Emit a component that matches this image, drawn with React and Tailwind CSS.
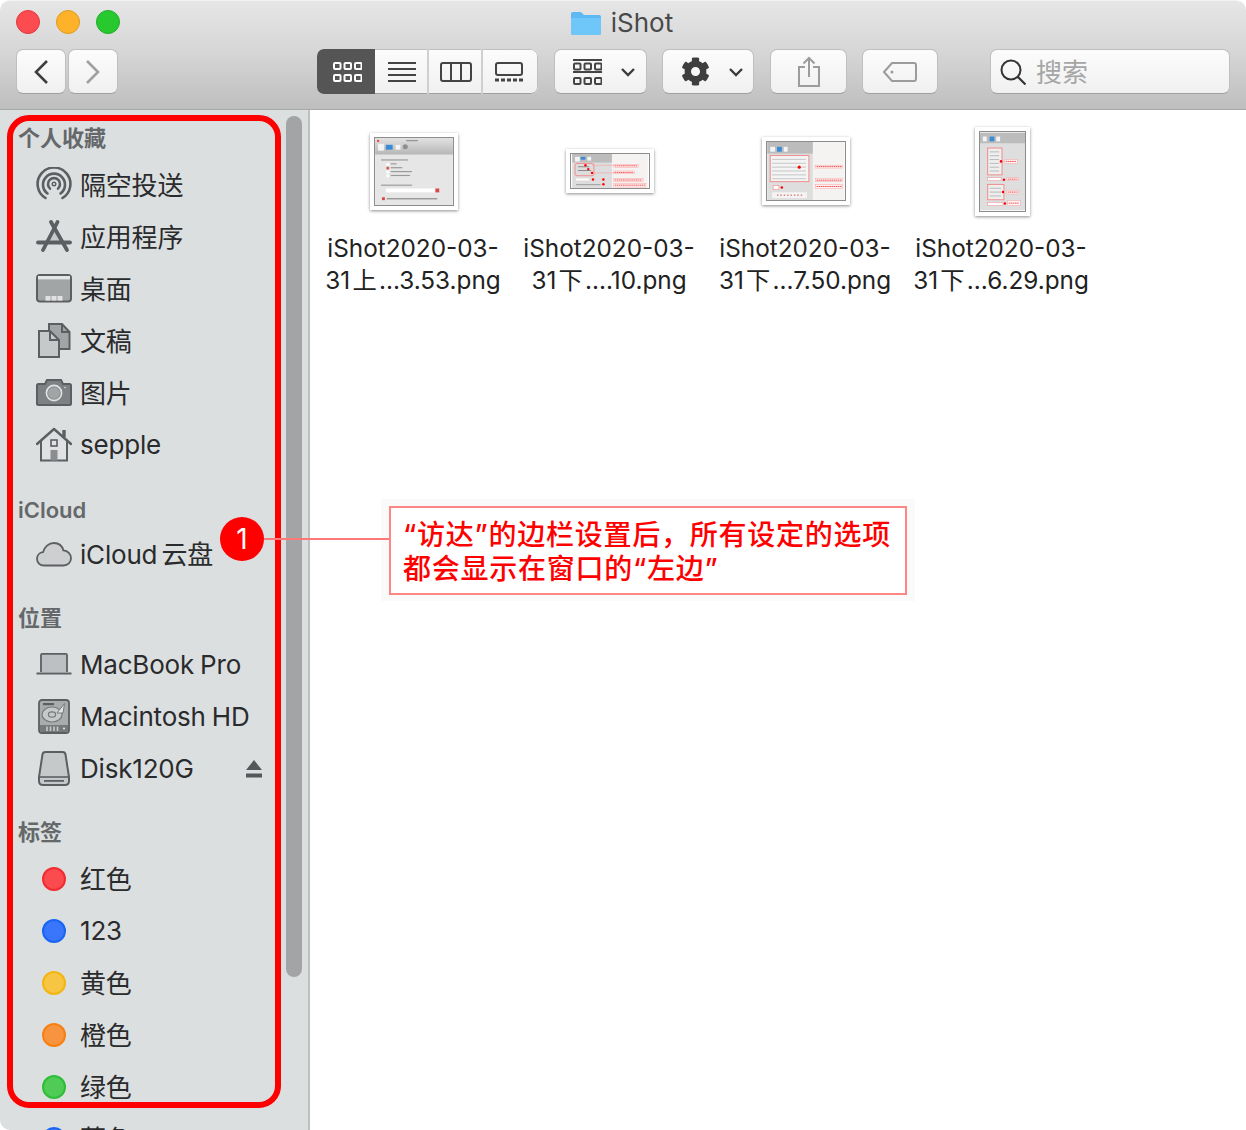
import React from 'react';
import { FaCog } from 'react-icons/fa';

const DARK = '#5c5f62';

const Svg = ({ w = 36, h = 36, className = '', children }) => (
    <svg width={w} height={h} viewBox={`0 0 ${w} ${h}`} className={`block shrink-0 ${className}`} fill="none">
        {children}
    </svg>
);

// sidebar icons
const AirdropIcon = () => (
    <Svg>
        <g stroke={DARK} strokeWidth="2.6" strokeLinecap="round">
            <path d="M9.5 31 A16.4 16.4 0 1 1 26.5 31" />
            <path d="M11.5 26.5 A11 11 0 1 1 24.5 26.5" />
            <path d="M14 21.6 A6 6 0 1 1 22 21.6" />
        </g>
        <circle cx="18" cy="17" r="1.8" stroke={DARK} strokeWidth="1.4" />
    </Svg>
);

const AppsIcon = () => (
    <Svg>
        <path d="M18 11 L10 24 H26 Z" fill="#c6c9ca" />
        <g stroke={DARK} strokeWidth="3.8" strokeLinecap="round">
            <path d="M21.5 3 L7 31" />
            <path d="M15 3 L31 31" />
            <path d="M2 23.5 H34" />
        </g>
    </Svg>
);

const DesktopIcon = () => (
    <Svg>
        <rect x="1" y="4" width="34" height="26.5" rx="3" fill="#a2a5a6" stroke={DARK} strokeWidth="2" />
        <rect x="2" y="5" width="32" height="3.4" fill="#e4e5e6" />
        <rect x="9.5" y="25" width="5" height="4.6" fill="#dfe1e2" />
        <rect x="15.5" y="25" width="5" height="4.6" fill="#dfe1e2" />
        <rect x="21.5" y="25" width="5" height="4.6" fill="#dfe1e2" />
    </Svg>
);

const DocsIcon = () => (
    <Svg>
        <path d="M13 1 H26 L33.5 9 V26 H13 Z" fill="#a2a5a6" stroke={DARK} strokeWidth="2" />
        <path d="M26 1 V9 H33.5" stroke={DARK} strokeWidth="2" />
        <path d="M3 8 H14 L23 17 V34 H3 Z" fill="#c6c9ca" stroke={DARK} strokeWidth="2" />
        <path d="M14 8 V17 H23" stroke={DARK} strokeWidth="2" />
    </Svg>
);

const CameraIcon = () => (
    <Svg>
        <path d="M2.5 9 H9 L11 5 H25 L27 9 H33.5 Q35 9 35 10.5 V28.5 Q35 30 33.5 30 H2.5 Q1 30 1 28.5 V10.5 Q1 9 2.5 9 Z" fill="#7e8183" stroke={DARK} strokeWidth="2" />
        <circle cx="18" cy="18" r="7.6" fill="#8b8e90" stroke="#dfe1e2" strokeWidth="1.6" />
        <circle cx="18" cy="18" r="5.8" fill="#a2a5a6" />
        <circle cx="29" cy="12.5" r="0.8" fill="#dfe1e2" />
    </Svg>
);

const HomeIcon = () => (
    <Svg>
        <path d="M5 14 V33.5 H31 V14" fill="#dfe1e2" stroke={DARK} strokeWidth="2" />
        <path d="M1 17 L18 2 L35 17" stroke={DARK} strokeWidth="2.4" strokeLinecap="round" strokeLinejoin="round" />
        <path d="M28 10 V3" stroke={DARK} strokeWidth="3.4" />
        <rect x="15" y="13" width="6" height="6" stroke={DARK} strokeWidth="1.6" />
        <rect x="14.5" y="23" width="7" height="10.5" fill="#8b8e90" />
    </Svg>
);

const CloudIcon = () => (
    <Svg>
        <path d="M8 28.5 C3.8 28.5 1 25.6 1 21.8 C1 18.2 3.6 15.5 7 15.2 C8.4 10 12.6 6 18 6 C22.8 6 26.2 9 27.4 13.4 C31.8 13.8 35 17 35 21.2 C35 25.4 31.8 28.5 27.6 28.5 Z" fill="#cdcfd1" stroke={DARK} strokeWidth="1.8" />
    </Svg>
);

const LaptopIcon = () => (
    <Svg>
        <path d="M5 25 V8 Q5 6.8 6.2 6.8 H29.8 Q31 6.8 31 8 V25" fill="#bdc0c2" stroke={DARK} strokeWidth="1.8" />
        <path d="M0.5 26.5 H35.5" stroke={DARK} strokeWidth="2" />
    </Svg>
);

const HddIcon = () => (
    <Svg>
        <rect x="3" y="1" width="30" height="33" rx="3" fill="#a9acad" stroke={DARK} strokeWidth="1.8" />
        <rect x="7" y="4" width="11" height="2.2" fill={DARK} />
        <ellipse cx="16" cy="15.5" rx="10" ry="7.5" fill="#c6c9ca" stroke="#777a7c" strokeWidth="1.2" />
        <ellipse cx="16" cy="15.5" rx="3.6" ry="2.6" stroke="#777a7c" strokeWidth="1.2" />
        <path d="M21 14 L28.5 4.5 L27 14 Z" fill="#e4e5e6" stroke="#777a7c" strokeWidth="1" />
        <path d="M4 26 H32 V31 Q32 33 30 33 H6 Q4 33 4 31 Z" fill="#77797b" />
        <path d="M11 27.5 V32 M14.5 27.5 V32 M18 27.5 V32 M21.5 27.5 V32" stroke="#c6c9ca" strokeWidth="1.6" />
        <circle cx="28" cy="29.5" r="1.1" fill="#dfe1e2" />
    </Svg>
);

const DiskIcon = () => (
    <Svg>
        <path d="M6.5 3.5 Q6.8 1 9.5 1 H26.5 Q29.2 1 29.5 3.5 L33 26 V30 Q33 34 29 34 H7 Q3 34 3 30 V26 Z" fill="#c6c9ca" stroke={DARK} strokeWidth="2" />
        <path d="M3.5 26 H32.5" stroke={DARK} strokeWidth="1.6" />
        <rect x="8" y="29" width="20" height="1.8" fill={DARK} />
    </Svg>
);

const EjectIcon = () => (
    <Svg w={16} h={18}>
        <path d="M8 0 L16 10 H0 Z" fill="#55585a" />
        <rect x="0" y="13.5" width="16" height="4" fill="#55585a" />
    </Svg>
);

const Dot = ({ className }) => (
    <div className="w-[36px] flex justify-center shrink-0">
        <div className={`w-[24px] h-[24px] rounded-full border-2 ${className}`} />
    </div>
);

const Row = ({ icon, label, trailing }) => {
    // chinese-only labels sit a pixel lower than latin ones
    const cjk = /^[\u4e00-\u9fff]+$/.test(label);
    return (
        <div className="h-[52px] flex items-center pl-[36px] pr-[24px] gap-[8px]">
            {icon}
            <span className={`text-[26px] leading-[32px] tracking-[-0.2px] [word-spacing:-1px] text-[#2a2b2c] whitespace-nowrap ${cjk ? 'pt-[2px]' : ''}`}>{label}</span>
            {trailing && <span className="ml-auto">{trailing}</span>}
        </div>
    );
};

const Heading = ({ children, className = 'h-[58px] pb-[10px]' }) => (
    <div className={`flex items-end pl-[18px] text-[22px] leading-[22px] font-semibold text-[#65686a] ${className}`}>
        {children}
    </div>
);

const Sidebar = () => (
    <aside className="w-[310px] shrink-0 flex bg-[#dcdfe0] border-r-2 border-[#bfc0c0] rounded-bl-[10px] overflow-hidden">
        <div className="w-[286px] shrink-0">
            <Heading className="h-[49px] pb-[10px]">个人收藏</Heading>
            <Row icon={<AirdropIcon />} label="隔空投送" />
            <Row icon={<AppsIcon />} label="应用程序" />
            <Row icon={<DesktopIcon />} label="桌面" />
            <Row icon={<DocsIcon />} label="文稿" />
            <Row icon={<CameraIcon />} label="图片" />
            <Row icon={<HomeIcon />} label="sepple" />
            <Heading className="h-[58px] pb-[8px]">iCloud</Heading>
            <Row icon={<CloudIcon />} label={'iCloud\u2006云盘'} />
            <Heading>位置</Heading>
            <Row icon={<LaptopIcon />} label="MacBook Pro" />
            <Row icon={<HddIcon />} label="Macintosh HD" />
            <Row icon={<DiskIcon />} label="Disk120G" trailing={<EjectIcon />} />
            <Heading>标签</Heading>
            <Row icon={<Dot className="bg-[#fb4b4f] border-[#f02c30]" />} label="红色" />
            <Row icon={<Dot className="bg-[#3a76fb] border-[#1764f5]" />} label="123" />
            <Row icon={<Dot className="bg-[#f6c543] border-[#f4b50f]" />} label="黄色" />
            <Row icon={<Dot className="bg-[#f7943f] border-[#f87f10]" />} label="橙色" />
            <Row icon={<Dot className="bg-[#50cb55] border-[#2ebd37]" />} label="绿色" />
            <Row icon={<Dot className="bg-[#3a76fb] border-[#1764f5]" />} label="蓝色" />
        </div>
        <div className="w-[16px] h-[861px] mt-[6px] shrink-0 rounded-full bg-[#a3a4a6]" />
    </aside>
);

// toolbar
const btn = 'h-[45px] rounded-[7px] bg-gradient-to-b from-[#fcfcfc] to-[#f0f0f0] border border-[#bfbfbf] border-b-[#a0a0a0] flex items-center justify-center shrink-0';
const segBorder = 'border-y border-[#bfbfbf] border-b-[#a0a0a0]';

const Squares = ({ y = 0, color, sw = 2 }) => (
    <g stroke={color} strokeWidth={sw}>
        {[0, 10.5, 21].map((x) => (
            <rect key={x} x={x + 1} y={y + 1} width="6.5" height="6" rx="1" />
        ))}
    </g>
);

const Chevron = () => (
    <svg width="16" height="10" viewBox="0 0 16 10" fill="none" className="block">
        <path d="M2 2 L8 8 L14 2" stroke="#3c3c3c" strokeWidth="2.4" />
    </svg>
);

const ViewSwitch = () => (
    <div className="w-[221px] h-[45px] flex rounded-[7px] overflow-hidden bg-gradient-to-b from-[#fcfcfc] to-[#f0f0f0] shrink-0">
        <div className="w-[58px] flex items-center justify-center bg-[#555555] pl-[3px]">
            <Svg w={29} h={20}>
                <Squares color="#fff" />
                <Squares y={12} color="#fff" />
            </Svg>
        </div>
        <div className={`w-[54px] flex items-center justify-center ${segBorder}`}>
            <Svg w={28} h={20}>
                <path d="M0 1 H28 M0 7 H28 M0 13 H28 M0 19 H28" stroke="#444" strokeWidth="2" />
            </Svg>
        </div>
        <div className="w-[2px] bg-[#cfcfcf] -ml-[2px] shrink-0" />
        <div className={`w-[54px] flex items-center justify-center ${segBorder}`}>
            <Svg w={32} h={20}>
                <rect x="1" y="1" width="30" height="18" rx="2" stroke="#444" strokeWidth="2" />
                <path d="M11 1 V19 M21 1 V19" stroke="#444" strokeWidth="2" />
            </Svg>
        </div>
        <div className="w-[2px] bg-[#cfcfcf] -ml-[2px] shrink-0" />
        <div className={`flex-1 flex items-center justify-center pr-[3px] rounded-r-[7px] border-r ${segBorder}`}>
            <Svg w={28} h={20}>
                <rect x="1" y="1" width="26" height="12" rx="2" stroke="#444" strokeWidth="2" />
                <path d="M0 18 H28" stroke="#444" strokeWidth="3" strokeDasharray="4 2" />
            </Svg>
        </div>
    </div>
);

const Toolbar = () => (
    <header className="h-[110px] shrink-0 rounded-t-[10px] bg-gradient-to-b from-[#e6e6e6] via-[#d5d5d5] to-[#bebebe] border-t border-[#f2f2f2] border-b border-b-[#a9a9a9]">
        <div className="h-[48px] relative flex items-center justify-center gap-[10px] pb-[4px] pr-[2px]">
            <div className="absolute left-[16px] top-[9px] flex gap-[16px]">
                <div className="w-[24px] h-[24px] rounded-full bg-[#fc4c50] border border-[#e2383d]" />
                <div className="w-[24px] h-[24px] rounded-full bg-[#fdb22a] border border-[#e09a1a]" />
                <div className="w-[24px] h-[24px] rounded-full bg-[#28c82f] border border-[#1fae27]" />
            </div>
            <Svg w={30} h={24}>
                <path d="M0 3 Q0 1 2 1 H10 L13 4 H28 Q30 4 30 6 V22 Q30 24 28 24 H2 Q0 24 0 22 Z" fill="#5cb9f3" />
                <path d="M0 7 H30 V22 Q30 24 28 24 H2 Q0 24 0 22 Z" fill="#6fc6f8" />
            </Svg>
            <span className="text-[26px] leading-[32px] text-[#48494a]">iShot</span>
        </div>
        <div className="flex items-center px-[16px]">
            <div className={`${btn} w-[50px]`}>
                <svg width="16" height="26" viewBox="0 0 16 26" fill="none">
                    <path d="M14 2 L3 13 L14 24" stroke="#3f3f3f" strokeWidth="2.6" />
                </svg>
            </div>
            <div className={`${btn} w-[50px] ml-[2px]`}>
                <svg width="16" height="26" viewBox="0 0 16 26" fill="none">
                    <path d="M2 2 L13 13 L2 24" stroke="#a0a0a0" strokeWidth="2.6" />
                </svg>
            </div>
            <div className="ml-[199px]">
                <ViewSwitch />
            </div>
            <div className={`${btn} w-[93px] ml-[16px] gap-[18px] pl-[8px]`}>
                <Svg w={29} h={26}>
                    <path d="M0 1 H29 M0 13 H29" stroke="#444" strokeWidth="2" />
                    <Squares y={3.5} color="#444" />
                    <Squares y={18} color="#444" />
                </Svg>
                <Chevron />
            </div>
            <div className={`${btn} w-[92px] ml-[15px] gap-[18px] pl-[8px]`}>
                <FaCog className="w-[29px] h-[29px] text-[#3e3e3e]" />
                <Chevron />
            </div>
            <div className={`${btn} w-[77px] ml-[16px]`}>
                <Svg w={22} h={31}>
                    <path d="M7 11 H1 V30 H21 V11 H15" stroke="#9c9c9c" strokeWidth="2" />
                    <path d="M11 21 V2 M5.5 7.5 L11 2 L16.5 7.5" stroke="#9c9c9c" strokeWidth="2" />
                </Svg>
            </div>
            <div className={`${btn} w-[76px] ml-[15px]`}>
                <Svg w={34} h={20}>
                    <path d="M9 1 H31 Q33 1 33 3 V17 Q33 19 31 19 H9 L1 10 Z" stroke="#9c9c9c" strokeWidth="2" />
                    <circle cx="9" cy="10" r="1.5" fill="#9c9c9c" />
                </Svg>
            </div>
            <div className={`${btn} w-[240px] ml-[52px] justify-start pl-[9px] gap-[10px]`}>
                <Svg w={26} h={26}>
                    <circle cx="11" cy="11" r="9.5" stroke="#333" strokeWidth="2" />
                    <path d="M18 18 L25.5 25.5" stroke="#333" strokeWidth="2.2" />
                </Svg>
                <span className="text-[26px] leading-[32px] text-[#a6a6a6] mt-[2px]">搜索</span>
            </div>
        </div>
    </header>
);

// file thumbnails
const Thumb = ({ w, h, children }) => (
    <div className="bg-white shadow-[0_1px_3px_rgba(0,0,0,0.45)] p-[4px]" style={{ width: w, height: h }}>
        <svg width={w - 8} height={h - 8} viewBox={`0 0 ${w - 8} ${h - 8}`} className="block border border-[#8c8c8c] blur-[0.4px]">
            {children}
        </svg>
    </div>
);

const ThumbBar = ({ w }) => (
    <>
        <defs>
            <linearGradient id={`tb${w}`} x1="0" y1="0" x2="0" y2="1">
                <stop offset="0" stopColor="#e2e2e2" />
                <stop offset="1" stopColor="#b6b6b6" />
            </linearGradient>
        </defs>
        <rect width={w} height="17" fill={`url(#tb${w})`} />
        <circle cx="3" cy="3" r="1.2" fill="#f44" />
        <rect x="3" y="6" width="6" height="7" fill="#f4f4f4" />
        <rect x="11" y="7" width="7" height="5" fill="#3b8ad8" />
        <rect x="21" y="7" width="5" height="5" fill="#f4f4f4" />
        <circle cx="31" cy="9" r="2.6" fill="#8e8e8e" />
        <rect x="32" y="2" width="12" height="1.4" fill="#999" />
    </>
);

// red note box next to a thumbnail's screenshot
const Note = ({ x, y, w, h }) => (
    <>
        <rect x={x} y={y} width={w} height={h} fill="#fff3f3" stroke="#f4a0a0" strokeWidth="0.5" />
        <path d={`M${x + 1} ${y + h / 2} H${x + w - 1}`} stroke="#e33" strokeWidth="0.9" strokeDasharray="1.6 0.6" />
    </>
);

const ThumbOne = () => (
    <Thumb w={88} h={77}>
        <rect width="80" height="69" fill="#e6e6e6" />
        <ThumbBar w={80} />
        <rect x="6" y="22" width="28" height="1.2" fill="#999" />
        <circle cx="13" cy="27" r="1.6" fill="#fff" />
        <rect x="16" y="26" width="6" height="1.2" fill="#999" />
        <circle cx="13" cy="31" r="1.6" fill="#d65a5a" />
        <rect x="16" y="30" width="12" height="1.2" fill="#999" />
        <circle cx="13" cy="35" r="1.6" fill="#fff" />
        <rect x="16" y="34" width="22" height="1.2" fill="#999" />
        <circle cx="13" cy="39" r="1.6" fill="#fff" />
        <rect x="16" y="38" width="20" height="1.2" fill="#999" />
        <rect x="6" y="48" width="32" height="1.2" fill="#999" />
        <rect x="11" y="52" width="51" height="4" fill="#fff" />
        <rect x="62" y="52" width="4" height="4" fill="#d64a4a" />
        <rect x="7" y="61" width="3" height="3" fill="#d64a4a" />
        <rect x="12" y="62" width="52" height="1.2" fill="#888" />
    </Thumb>
);

const ThumbTwo = () => (
    <Thumb w={88} h={44}>
        <rect width="80" height="36" fill="#f5f3f1" />
        <rect width="42" height="36" fill="#dddddd" />
        <rect width="42" height="9" fill="#bcbcbc" />
        <rect x="3" y="3" width="5" height="5" fill="#f4f4f4" />
        <rect x="9" y="3" width="5" height="3" fill="#3b8ad8" />
        <rect x="16" y="3" width="4" height="4" fill="#f4f4f4" />
        <rect x="3" y="10" width="20" height="13" rx="2" fill="none" stroke="#f08a8a" />
        <rect x="6" y="13" width="12" height="1" fill="#888" />
        <rect x="6" y="17" width="14" height="1" fill="#888" />
        <circle cx="14" cy="12" r="1.3" fill="#f00" />
        <circle cx="17" cy="16" r="1.3" fill="#f00" />
        <circle cx="21" cy="20" r="1.3" fill="#f00" />
        <rect x="4" y="26" width="14" height="2" fill="#fff" />
        <circle cx="22" cy="27" r="1.3" fill="#f00" />
        <circle cx="33" cy="27" r="1.3" fill="#f00" />
        <rect x="4" y="32" width="26" height="1" fill="#999" />
        <circle cx="33" cy="32" r="1.3" fill="#f00" />
        <path d="M21 12 H44 M24 20 H44" stroke="#f4a0a0" strokeWidth="0.6" />
        <Note x={44} y={11} w={26} h={3} />
        <Note x={44} y={18} w={22} h={3} />
        <Note x={44} y={26} w={31} h={3} />
        <Note x={44} y={31} w={34} h={4} />
    </Thumb>
);

const ThumbThree = () => (
    <Thumb w={88} h={68}>
        <rect width="80" height="60" fill="#f5f3f1" />
        <rect width="47" height="60" fill="#dedede" />
        <rect width="47" height="12" fill="#bcbcbc" />
        <rect x="3" y="5" width="5" height="5" fill="#f4f4f4" />
        <rect x="10" y="5" width="5" height="5" fill="#3b8ad8" />
        <rect x="17" y="5" width="4" height="5" fill="#f4f4f4" />
        <rect x="3" y="14" width="40" height="27" fill="#f4f4f4" stroke="#f08a8a" />
        <path d="M5 18 H40 M5 22 H40 M5 26 H40 M5 30 H40 M5 34 H40 M5 38 H40" stroke="#b8b8b8" strokeWidth="0.8" />
        <circle cx="33" cy="26" r="1.6" fill="#f00" />
        <rect x="6" y="45" width="6" height="4" fill="#fff" stroke="#f08a8a" strokeWidth="0.6" />
        <circle cx="15" cy="47" r="1.3" fill="#f00" />
        <rect x="5" y="52" width="36" height="6" fill="#f4f4f4" />
        <path d="M10 55 H36" stroke="#c44" strokeWidth="1" strokeDasharray="1.5 2" />
        <Note x={50} y={24} w={28} h={3} />
        <Note x={50} y={38} w={28} h={3} />
        <Note x={50} y={44} w={28} h={4} />
    </Thumb>
);

const ThumbFour = () => (
    <Thumb w={55} h={89}>
        <rect width="47" height="81" fill="#dedede" />
        <rect width="47" height="11" fill="#bcbcbc" />
        <rect x="3" y="4" width="4" height="5" fill="#f4f4f4" />
        <rect x="10" y="4" width="5" height="5" fill="#3b8ad8" />
        <rect x="17" y="4" width="4" height="5" fill="#f4f4f4" />
        <rect x="8" y="16" width="15" height="28" fill="#eee" stroke="#f08a8a" />
        <path d="M10 20 H20 M10 24 H20 M10 28 H20 M10 32 H20 M10 36 H20 M10 40 H20" stroke="#aaa" strokeWidth="0.8" />
        <circle cx="22" cy="30" r="1.4" fill="#f00" />
        <Note x={26} y={28} w={13} h={4} />
        <rect x="8" y="47" width="14" height="3" fill="#fff" stroke="#f08a8a" strokeWidth="0.5" />
        <circle cx="25" cy="49" r="1.3" fill="#f00" />
        <Note x={28} y={47} w={12} h={3} />
        <rect x="8" y="54" width="17" height="16" fill="#eee" stroke="#f08a8a" />
        <path d="M10 58 H22 M10 62 H22 M10 66 H22" stroke="#aaa" strokeWidth="0.8" />
        <circle cx="24" cy="62" r="1.3" fill="#f00" />
        <Note x={28} y={60} w={12} h={4} />
        <rect x="8" y="73" width="16" height="3" fill="#fff" stroke="#f08a8a" strokeWidth="0.5" />
        <circle cx="26" cy="74" r="1.3" fill="#f00" />
        <Note x={29} y={71} w={13} h={5} />
    </Thumb>
);

const files = [
    { thumb: <ThumbOne />, line1: 'iShot2020-03-', line2: '31\u200a上\u200a…3.53.png' },
    { thumb: <ThumbTwo />, line1: 'iShot2020-03-', line2: '31\u200a下\u200a….10.png' },
    { thumb: <ThumbThree />, line1: 'iShot2020-03-', line2: '31\u200a下\u200a…7.50.png' },
    { thumb: <ThumbFour />, line1: 'iShot2020-03-', line2: '31\u200a下\u200a…6.29.png' },
];

const FileItem = ({ file }) => (
    <div className="w-[196px] flex flex-col items-center">
        <div className="h-[90px] flex items-center justify-center pl-[2px]">{file.thumb}</div>
        <div className="mt-[16px] text-[24.3px] leading-[32px] text-[#222] text-center whitespace-nowrap">
            <div>{file.line1}</div>
            <div>{file.line2}</div>
        </div>
    </div>
);

export default function App() {
    return (
        <div className="relative w-[1246px] h-[1130px] overflow-hidden bg-white font-['Inter','Noto_Sans_CJK_SC',sans-serif]">
            <div className="h-full flex flex-col">
                <Toolbar />
                <div className="flex-1 flex min-h-0">
                    <Sidebar />
                    <main className="flex-1 bg-white flex items-start pl-[5px] pt-[16px]">
                        {files.map((f, i) => (
                            <FileItem key={i} file={f} />
                        ))}
                    </main>
                </div>
            </div>

            {/* annotation on top of the window */}
            <div className="absolute left-[7px] top-[115px] w-[274px] h-[993px] border-[6px] border-[#ff0000] rounded-[22px]" />
            <div className="absolute left-[381px] top-[499px] w-[534px] h-[102px] bg-[#fafafa] flex items-center justify-center">
                <div className="w-[518px] h-[89px] border-2 border-[#ff8585] bg-white pl-[12px] pt-[10px] text-[28px] leading-[34px] tracking-[0.75px] font-medium text-[#ff0000] whitespace-nowrap">
                    <div>{'“访达”的边栏设置后\uFF0C所有设定的选项'}</div>
                    <div>都会显示在窗口的“左边”</div>
                </div>
            </div>
            <div className="absolute left-[264px] top-[538px] w-[125px] h-[2px] bg-[#f77]" />
            <div className="absolute left-[220px] top-[517px] w-[44px] h-[44px] rounded-full bg-[#ff0000] text-white text-[28px] leading-[44px] text-center">1</div>
        </div>
    );
}
